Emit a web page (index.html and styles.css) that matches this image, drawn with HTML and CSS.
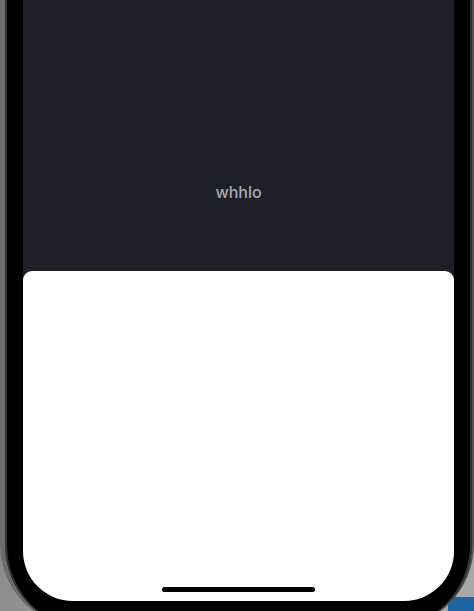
FILE: index.html
```html
<!DOCTYPE html>
<html>
  <head>
    <meta charset="UTF-8">
    <title>whhlo</title>
    <link rel="stylesheet" href="styles.css">
  </head>
  <body>
    <div class="device">
      <div class="screen">
        <div class="stage">
          <span class="title">whhlo</span>
        </div>
        <div class="sheet">
          <div class="home-bar"></div>
        </div>
      </div>
    </div>
  </body>
</html>
```
FILE: styles.css
```css
html, body {
  margin: 0;
  height: 611px;
  overflow: hidden;
}
body {
  background: linear-gradient(#1c64a2, #1c64a2) no-repeat right bottom / 26px 14px,
    linear-gradient(to right, #8c8c8c, #b9b9b9 40%, #a8a8a8);
  font-family: Inter, "Noto Sans", sans-serif;
}
/* phone body: metal rim + black bezel */
.device {
  box-sizing: border-box;
  width: 474px;
  height: 628px;
  padding: 0 18px;
  background: #000;
  border-left: 5px solid #6c6c6c;
  border-right: 2px solid #555;
  border-radius: 0 0 84px 84px;
  box-shadow: inset 2px 0 #333, inset -2px 0 #333, 0 0 0 0 #000;
}
.screen {
  height: 601px;
  display: flex;
  flex-direction: column;
  background: #1e1f29;
  border-radius: 0 0 50px 50px;
  overflow: hidden;
}
.stage {
  height: 271px;
  display: flex;
  flex-direction: column;
  justify-content: flex-end;
  align-items: center;
  padding-bottom: 69px;
  box-sizing: border-box;
}
.title {
  color: #a9a9b2;
  font-size: 16px;
  font-weight: 500;
  line-height: 19px;
}
.sheet {
  flex: 1;
  display: flex;
  flex-direction: column;
  justify-content: flex-end;
  align-items: center;
  padding-bottom: 9px;
  background: #fff;
  border-radius: 9px 9px 0 0;
}
.home-bar {
  width: 153px;
  height: 5px;
  border-radius: 3px;
  background: #000;
}
```
